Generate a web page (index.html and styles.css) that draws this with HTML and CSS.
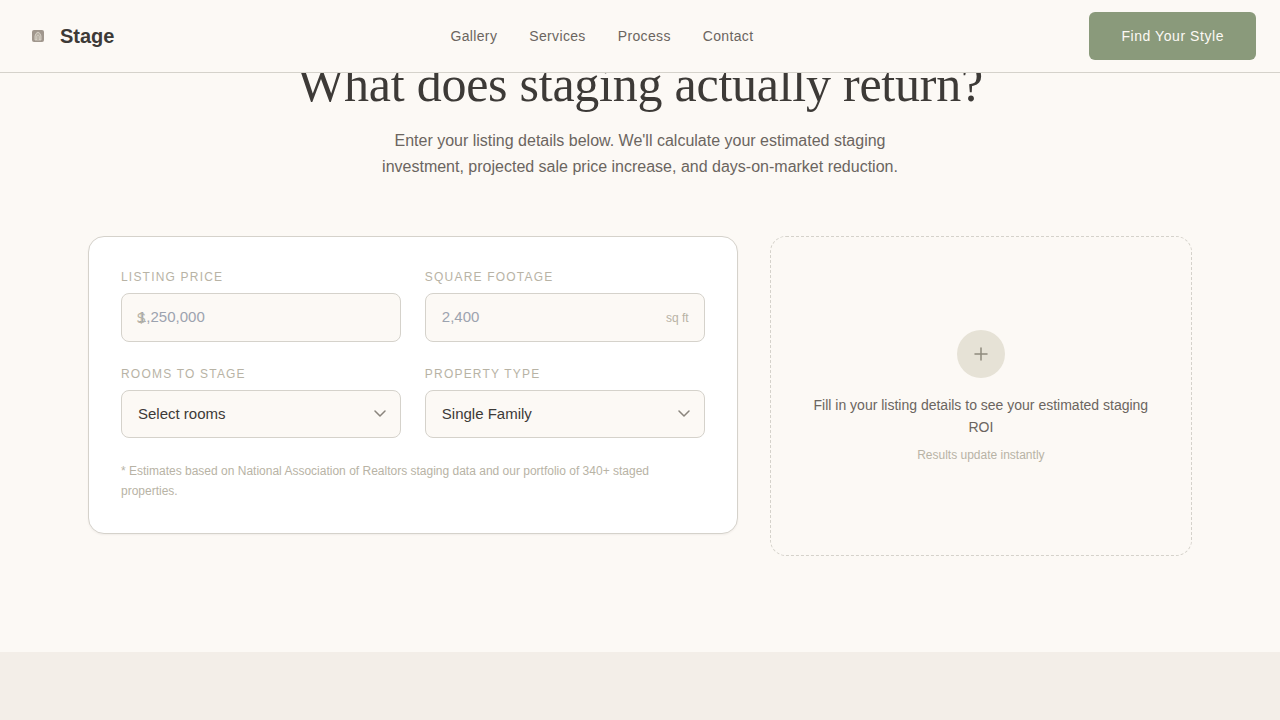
FILE: index.html
```
<!DOCTYPE html>
<html lang="en">
<head>
  <meta charset="UTF-8">
  <meta name="viewport" content="width=device-width, initial-scale=1.0">
  <title>Stage</title>
  <link rel="stylesheet" href="styles.css">
</head>
<body>
  <header class="site-header">
    <a class="brand" href="#">
      <svg class="brand-icon" viewBox="0 0 12 12" aria-hidden="true">
        <rect width="12" height="12" rx="2" fill="#a0978d"/>
        <path d="M3 10V6Q3.500 3 6 2q2.500 1 3 4v4z" fill="#b9b2a6" stroke="#ddd8ce" stroke-width="0.8"/>
        <path d="M5 10V6.500Q6 4 7 6.500V10" fill="#a39b90" stroke="#ebe6dd" stroke-width="0.7"/>
      </svg>
      <span>Stage</span>
    </a>
    <nav class="nav">
      <a href="#">Gallery</a>
      <a href="#">Services</a>
      <a href="#">Process</a>
      <a href="#">Contact</a>
    </nav>
    <button class="cta" type="button">Find Your Style</button>
  </header>

  <main>
    <!-- ROI calculator -->
    <section class="calculator">
      <div class="intro">
        <h1>What does staging actually return?</h1>
        <p>Enter your listing details below. We'll calculate your estimated staging investment, projected sale price increase, and days-on-market reduction.</p>
      </div>

      <div class="panels">
        <form class="card">
          <div class="fields">
            <div class="field">
              <label for="price">Listing Price</label>
              <div class="control">
                <input id="price" type="text" inputmode="numeric" placeholder="1,250,000">
                <span class="prefix">$</span>
              </div>
            </div>
            <div class="field">
              <label for="sqft">Square Footage</label>
              <div class="control">
                <input id="sqft" type="text" inputmode="numeric" placeholder="2,400">
                <span class="suffix">sq ft</span>
              </div>
            </div>
            <div class="field">
              <label for="rooms">Rooms to Stage</label>
              <div class="control">
                <select id="rooms">
                  <option>Select rooms</option>
                </select>
                <svg class="chevron" viewBox="0 0 12 8" aria-hidden="true"><path d="M1 1l5 5 5-5"/></svg>
              </div>
            </div>
            <div class="field">
              <label for="type">Property Type</label>
              <div class="control">
                <select id="type">
                  <option>Single Family</option>
                </select>
                <svg class="chevron" viewBox="0 0 12 8" aria-hidden="true"><path d="M1 1l5 5 5-5"/></svg>
              </div>
            </div>
          </div>
          <p class="note">* Estimates based on National Association of Realtors staging data and our portfolio of 340+ staged properties.</p>
        </form>

        <div class="empty">
          <div class="empty-icon">
            <svg viewBox="0 0 20 20" aria-hidden="true"><path d="M10 4v12M4 10h12"/></svg>
          </div>
          <p class="empty-text">Fill in your listing details to see your estimated staging ROI</p>
          <p class="empty-hint">Results update instantly</p>
        </div>
      </div>
    </section>

    <section class="next"></section>
  </main>
</body>
</html>
```

FILE: styles.css
```
/* General */
* {
  box-sizing: border-box;
}

body {
  margin: 0;
  font-family: "Liberation Sans", Arial, sans-serif;
  background: #fcf9f5;
  color: #3d3a37;
}

h1,
p {
  margin: 0;
}

/* Header */
.site-header {
  position: fixed;
  top: 0;
  left: 0;
  right: 0;
  z-index: 10;
  display: flex;
  align-items: center;
  justify-content: space-between;
  padding: 12px 24px;
  background: #fcf9f5;
  border-bottom: 1px solid #d5d2cb;
}

.brand {
  display: flex;
  align-items: center;
  gap: 16px;
  padding-left: 8px;
  color: #3d3a37;
  font-size: 20px;
  font-weight: bold;
  text-decoration: none;
}

.brand-icon {
  width: 12px;
  height: 12px;
}

.nav {
  display: flex;
  gap: 32px;
}

.nav a {
  color: #6b6560;
  font-size: 14px;
  letter-spacing: 0.025em;
  text-decoration: none;
}

.cta {
  height: 48px;
  padding: 0 32px;
  border: none;
  border-radius: 6px;
  background: #8a9a7b;
  color: #fcf9f5;
  font-family: inherit;
  font-size: 14px;
  letter-spacing: 0.04em;
  cursor: pointer;
}

/* Calculator */
.calculator {
  padding: 56px 88px 96px;
}

.intro {
  max-width: 720px;
  margin: 0 auto 56px;
  text-align: center;
}

.intro h1 {
  margin-bottom: 16px;
  font-family: "Liberation Serif", "Times New Roman", serif;
  font-size: 50px;
  font-weight: normal;
  line-height: 56px;
  letter-spacing: -0.005em;
}

.intro p {
  max-width: 520px;
  margin: 0 auto;
  color: #6b6560;
  font-size: 16px;
  line-height: 26px;
}

.panels {
  display: grid;
  grid-template-columns: 20fr 13fr;
  align-items: start;
  gap: 32px;
}

.card {
  padding: 32px;
  border: 1px solid #d5d2cb;
  border-radius: 16px;
  background: #fff;
  box-shadow: 0 1px 2px rgba(61, 58, 55, 0.06);
}

.fields {
  display: grid;
  grid-template-columns: 1fr 1fr;
  gap: 24px;
}

.field label {
  display: block;
  margin-bottom: 8px;
  color: #b8b3a5;
  font-size: 12px;
  line-height: 16px;
  letter-spacing: 0.1em;
  text-transform: uppercase;
}

.control {
  position: relative;
}

.control input,
.control select {
  display: block;
  width: 100%;
  height: 48px;
  padding: 0 16px 2px;
  border: 1px solid #d5d2cb;
  border-radius: 8px;
  background: #fcf9f5;
  color: #3d3a37;
  font-family: inherit;
  font-size: 15px;
  appearance: none;
}

.control input {
  height: 49px;
}

.control input::placeholder {
  color: #9ca3af;
}

.prefix,
.suffix {
  position: absolute;
  top: 0;
  bottom: 0;
  display: flex;
  align-items: center;
  color: #b8b3a5;
  pointer-events: none;
}

.prefix {
  left: 16px;
  font-size: 15px;
}

.suffix {
  right: 16px;
  font-size: 12px;
}

.chevron {
  position: absolute;
  top: 20px;
  right: 15px;
  width: 12px;
  height: 8px;
  fill: none;
  stroke: #8a857d;
  stroke-width: 1.5;
  stroke-linecap: round;
  stroke-linejoin: round;
  pointer-events: none;
}

.note {
  margin-top: 23px;
  color: #b8b3a5;
  font-size: 12px;
  line-height: 20px;
}

/* Results placeholder */
.empty {
  display: flex;
  flex-direction: column;
  align-items: center;
  justify-content: center;
  min-height: 320px;
  padding: 32px;
  border: 1px dashed #d5d2cb;
  border-radius: 16px;
  text-align: center;
}

.empty-icon {
  display: flex;
  align-items: center;
  justify-content: center;
  width: 48px;
  height: 48px;
  margin-bottom: 16px;
  border-radius: 50%;
  background: #e6e2d6;
}

.empty-icon svg {
  width: 20px;
  height: 20px;
  fill: none;
  stroke: #8f8b7d;
  stroke-width: 1.5;
  stroke-linecap: round;
}

.empty-text {
  color: #6b6560;
  font-size: 14px;
  line-height: 22px;
}

.empty-hint {
  margin-top: 10px;
  color: #b8b3a5;
  font-size: 12px;
  line-height: 14px;
}

/* Next section */
.next {
  min-height: 68px;
  background: #f3eee8;
}
```
